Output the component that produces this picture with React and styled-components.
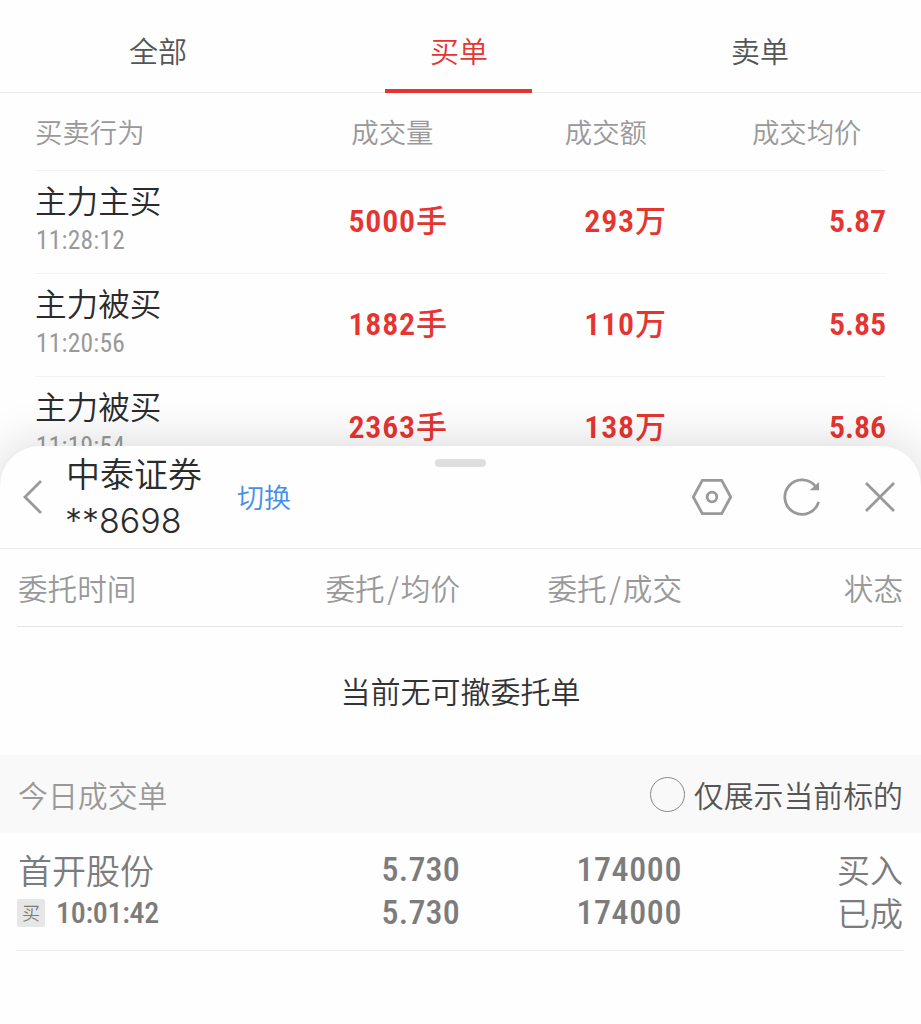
import styled, { createGlobalStyle } from "styled-components";

const GlobalStyle = createGlobalStyle`
    * {
        box-sizing: border-box;
    }

    body {
        margin: 0;
        background-color: #fefefe;
        font-family: "Noto Sans CJK SC", sans-serif;
        font-weight: 350;
        overflow: hidden;
    }
`;

const Page = styled.div`
    height: 1024px;
    display: flex;
    flex-direction: column;
    overflow: hidden;
`;

const Tabs = styled.nav`
    height: 93px;
    padding: 0 11px 0 7px;
    border-bottom: 1px solid #ececec;
    display: grid;
    grid-template-columns: 301px 301px 301px;
    justify-items: center;
    flex-shrink: 0;
`;

const Tab = styled.div`
    width: 147px;
    height: 93px;
    padding: 8px 0 0 1px;
    border-bottom: 4px solid ${(props) => (props.$active ? "#e63431" : "transparent")};
    color: ${(props) => (props.$active ? "#e63431" : "#555")};
    font-size: 29px;
    line-height: 85px;
    text-align: center;
`;

const Trades = styled.section`
    height: 353px;
    padding: 0 35px;
    flex-shrink: 0;
`;

const TradesHead = styled.div`
    height: 78px;
    display: grid;
    grid-template-columns: 200px 198.5px 213.5px 214.5px;
    border-bottom: 1px solid #f3f3f3;
    color: #999;
    font-size: 27.4px;
    line-height: 76px;
    text-align: right;

    & > :first-child {
        text-align: left;
    }
`;

const TradeRow = styled.div`
    height: 103px;
    display: grid;
    grid-template-columns: 200px 212px 219px 220px;
    border-bottom: 1px solid #f3f3f3;
`;

const TradeName = styled.div`
    height: 49px;
    padding-top: 5px;
    color: #2b2b2b;
    font-size: 31.6px;
    line-height: 46px;
`;

const Digits = styled.span`
    font-family: Roboto, "Noto Sans CJK SC", sans-serif;
    font-weight: 500;
    font-stretch: 75%;
`;

const TradeTime = styled(Digits)`
    display: block;
    color: #999;
    font-size: 25.5px;
    font-weight: 450;
    line-height: 41px;
    letter-spacing: 0.2px;
    padding-left: 1px;
`;

const TradeValue = styled(Digits)`
    color: #e63431;
    font-size: 32px;
    font-weight: 600;
    line-height: 101px;
    letter-spacing: ${(props) => (props.$tight ? "-0.1px" : "0.8px")};
    text-align: right;
`;

const Unit = styled.span`
    font-size: 31px;
    font-weight: 500;
    letter-spacing: 0;
`;

const Sheet = styled.section`
    flex: 1;
    position: relative;
    border-radius: 40px 40px 0 0;
    background-color: #fefefe;
    box-shadow: 0 0 50px rgba(0, 0, 0, 0.16);
`;

const Handle = styled.div`
    position: absolute;
    top: 13px;
    left: 435px;
    width: 51px;
    height: 8px;
    border-radius: 4px;
    background-color: #dedede;
`;

const SheetHead = styled.header`
    height: 103px;
    padding: 0 25px 0 22px;
    border-bottom: 1px solid #ededed;
    display: flex;
    align-items: center;
    color: #999;
`;

const Account = styled.div`
    width: 171px;
    margin-left: 23px;
    color: #2b2b2b;
    font-size: 34px;
    line-height: 47px;
`;

const AccountName = styled.div`
    height: 46px;
    line-height: 43px;
`;

const AccountNumber = styled.div`
    margin-left: -1px;
    font-family: Inter, sans-serif;
    font-weight: 300;
`;

const SwitchLink = styled.a`
    flex: 1;
    padding-bottom: 1px;
    color: #4290ea;
    font-size: 27px;
`;

const Actions = styled.div`
    display: flex;
    align-items: center;
`;

const Icon = styled.svg`
    display: block;
    fill: none;
    stroke: #999;
    stroke-width: 2.8;
    margin-left: ${(props) => props.$gap || 0}px;
`;

const OrderGrid = styled.div`
    margin: 0 18px 0 17px;
    display: grid;
    grid-template-columns: 200px 243px 222px 221px;
    text-align: right;

    & > :first-child {
        text-align: left;
        padding-left: 1px;
    }
`;

const OrdersHead = styled(OrderGrid)`
    height: 78px;
    border-bottom: 1px solid #e4e4e4;
    color: #999;
    font-size: 29.6px;
    line-height: 77px;
`;

const Slash = styled.span`
    padding: 0 2px 0 2.5px;
`;

const Empty = styled.p`
    height: 128px;
    margin: 0;
    color: #333;
    font-size: 30px;
    line-height: 127px;
    text-align: center;
`;

const Band = styled.div`
    height: 78px;
    padding: 0 18px;
    background-color: #f9f9f9;
    display: flex;
    align-items: center;
    justify-content: space-between;
    color: #999;
    font-size: 29.9px;
    line-height: 42px;
`;

const Filter = styled.label`
    display: flex;
    align-items: center;
    gap: 8.5px;
    color: #555;
`;

const Radio = styled.span`
    width: 35px;
    height: 35px;
    border: 1.5px solid #888;
    border-radius: 50%;
`;

const OrderRow = styled(OrderGrid)`
    height: 118px;
    padding-top: 15px;
    border-bottom: 1px solid #ececec;
    color: #7c7c7c;
    font-size: 34px;
    line-height: 43px;
`;

const OrderValue = styled(Digits)`
    display: block;
    font-size: 34px;
    letter-spacing: ${(props) => (props.$tight ? "0.2px" : "0.6px")};
`;

const OrderState = styled.div`
    font-size: 33px;
`;

const OrderMeta = styled.div`
    height: 43px;
    display: flex;
    align-items: center;
    gap: 11px;
    margin-left: -1px;
`;

const OrderTime = styled(Digits)`
    font-size: 30px;
    letter-spacing: -0.3px;
`;

const Badge = styled.span`
    width: 28px;
    height: 28px;
    border-radius: 2px;
    background-color: #e6e6e6;
    font-size: 18px;
    line-height: 27px;
    text-align: center;
`;

const tabs = ["全部", "买单", "卖单"];

const trades = [
    { name: "主力主买", time: "11:28:12", volume: 5000, amount: 293, price: "5.87" },
    { name: "主力被买", time: "11:20:56", volume: 1882, amount: 110, price: "5.85" },
    { name: "主力被买", time: "11:19:54", volume: 2363, amount: 138, price: "5.86" },
];

function TradeItem({ trade }) {
    return (
        <TradeRow>
            <div>
                <TradeName>{trade.name}</TradeName>
                <TradeTime>{trade.time}</TradeTime>
            </div>
            <TradeValue>
                {trade.volume}
                <Unit>手</Unit>
            </TradeValue>
            <TradeValue>
                {trade.amount}
                <Unit>万</Unit>
            </TradeValue>
            <TradeValue $tight>{trade.price}</TradeValue>
        </TradeRow>
    );
}

function SheetHeader() {
    return (
        <SheetHead>
            <Icon width="21" height="36" viewBox="0 0 21 36">
                <path d="M19 2 3 18l16 16" />
            </Icon>
            <Account>
                <AccountName>中泰证券</AccountName>
                <AccountNumber>**8698</AccountNumber>
            </Account>
            <SwitchLink>切换</SwitchLink>
            <Actions>
                <Icon width="42" height="38" viewBox="0 0 42 38">
                    <path d="M11.3 2.4h19.4L39.7 19l-9 16.6H11.3L2.3 19Z" />
                    <circle cx="21" cy="19" r="4.8" />
                </Icon>
                <Icon width="40" height="40" viewBox="0 0 40 40" $gap={49}>
                    <path d="M34 10A17.2 17.2 0 1 0 36.6 24.8" />
                    <path d="M37 5v8.2h-9.4Z" fill="#999" stroke="none" />
                </Icon>
                <Icon width="32" height="32" viewBox="0 0 32 32" $gap={42}>
                    <path d="m2 2 28 28M30 2 2 30" />
                </Icon>
            </Actions>
        </SheetHead>
    );
}

function App() {
    return (
        <Page>
            <GlobalStyle />
            <Tabs>
                {tabs.map((tab) => (
                    <Tab key={tab} $active={tab === "买单"}>
                        {tab}
                    </Tab>
                ))}
            </Tabs>
            <Trades>
                <TradesHead>
                    <span>买卖行为</span>
                    <span>成交量</span>
                    <span>成交额</span>
                    <span>成交均价</span>
                </TradesHead>
                {trades.map((trade) => (
                    <TradeItem key={trade.time} trade={trade} />
                ))}
            </Trades>
            <Sheet>
                <Handle />
                <SheetHeader />
                <OrdersHead>
                    <span>委托时间</span>
                    <span>
                        委托<Slash>/</Slash>均价
                    </span>
                    <span>
                        委托<Slash>/</Slash>成交
                    </span>
                    <span>状态</span>
                </OrdersHead>
                <Empty>当前无可撤委托单</Empty>
                <Band>
                    <span>今日成交单</span>
                    <Filter>
                        <Radio />
                        仅展示当前标的
                    </Filter>
                </Band>
                <OrderRow>
                    <div>
                        <div>首开股份</div>
                        <OrderMeta>
                            <Badge>买</Badge>
                            <OrderTime>10:01:42</OrderTime>
                        </OrderMeta>
                    </div>
                    <div>
                        <OrderValue $tight>5.730</OrderValue>
                        <OrderValue $tight>5.730</OrderValue>
                    </div>
                    <div>
                        <OrderValue>174000</OrderValue>
                        <OrderValue>174000</OrderValue>
                    </div>
                    <div>
                        <OrderState>买入</OrderState>
                        <OrderState>已成</OrderState>
                    </div>
                </OrderRow>
            </Sheet>
        </Page>
    );
}

export default App;
